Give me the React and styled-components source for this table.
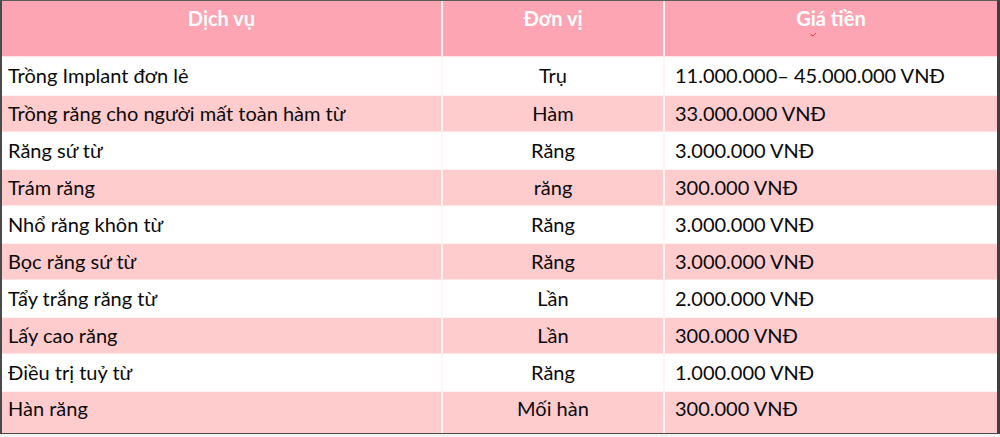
import React from 'react'
import styled, { createGlobalStyle } from 'styled-components'

const GlobalStyle = createGlobalStyle`
  html, body {
    margin: 0;
    padding: 0;
    background: #f4f4f4;
  }
  body {
    font-family: Lato, "Open Sans", "Liberation Sans", sans-serif;
  }
`

const rows = [
  { name: 'Trồng Implant đơn lẻ', unit: 'Trụ', price: '11.000.000– 45.000.000 VNĐ', h: 39 },
  { name: 'Trồng răng cho người mất toàn hàm từ', unit: 'Hàm', price: '33.000.000 VNĐ', h: 36 },
  { name: 'Răng sứ từ', unit: 'Răng', price: '3.000.000 VNĐ', h: 38 },
  { name: 'Trám răng', unit: 'răng', price: '300.000 VNĐ', h: 36 },
  { name: 'Nhổ răng khôn từ', unit: 'Răng', price: '3.000.000 VNĐ', h: 38 },
  { name: 'Bọc răng sứ từ', unit: 'Răng', price: '3.000.000 VNĐ', h: 36 },
  { name: 'Tẩy trắng răng từ', unit: 'Lần', price: '2.000.000 VNĐ', h: 38 },
  { name: 'Lấy cao răng', unit: 'Lần', price: '300.000 VNĐ', h: 36 },
  { name: 'Điều trị tuỷ từ', unit: 'Răng', price: '1.000.000 VNĐ', h: 38 },
  { name: 'Hàn răng', unit: 'Mối hàn', price: '300.000 VNĐ', h: 42, pb: 9 },
]

const App = () => {
  return (
    <>
      <GlobalStyle />
      <Frame>
        <HeadRow>
          <HeadCell>Dịch vụ</HeadCell>
          <HeadCell>Đơn vị</HeadCell>
          <HeadCell>
            G<Squiggle>i</Squiggle>á tiền
          </HeadCell>
        </HeadRow>
        {rows.map((r, i) => (
          <Row key={i} $pink={i % 2 === 1} $h={r.h} $pb={r.pb || 2}>
            <Cell>{r.name}</Cell>
            <Cell $center>{r.unit}</Cell>
            <Cell $price>{r.price}</Cell>
          </Row>
        ))}
      </Frame>
    </>
  )
}

export default App

const Frame = styled.div`
  width: 1000px;
  box-sizing: border-box;
  display: flex;
  flex-direction: column;
  background: #ffffff;
  border-top: 1px solid #5a5a5a;
  border-left: 2px solid #4a4a4a;
  border-right: 3px solid #3e3e3e;
  border-bottom: 1px solid #4a4a4a;
`

const HeadRow = styled.div`
  display: grid;
  grid-template-columns: 441px 222px 1fr;
  height: 55px;
`

const HeadCell = styled.div`
  box-sizing: border-box;
  background: #fda5b3;
  border-right: 2px solid #fff3f5;
  color: #ffffff;
  font-weight: 700;
  font-size: 20px;
  text-align: center;
  padding-top: 5px;
  &:last-child {
    border-right: none;
  }
`

const Squiggle = styled.span`
  text-decoration: underline wavy #e0202a;
  text-decoration-thickness: 1px;
  text-underline-offset: 6px;
`

const Row = styled.div`
  display: grid;
  grid-template-columns: 441px 222px 1fr;
  height: ${(p) => p.$h}px;
  box-sizing: border-box;
  border-top: 1px solid ${(p) => (p.$pink ? '#fff2f2' : '#ffe3e5')};
  background: ${(p) => (p.$pink ? '#ffcccd' : '#ffffff')};
  & > div {
    padding-bottom: ${(p) => p.$pb}px;
  }
`

const Cell = styled.div`
  display: flex;
  align-items: center;
  justify-content: ${(p) => (p.$center ? 'center' : 'flex-start')};
  box-sizing: border-box;
  padding-left: ${(p) => (p.$center ? '0' : p.$price ? '10px' : '6px')};
  border-right: ${(p) => (p.$price ? 'none' : '2px solid #fff5f5')};
  font-size: 20px;
  color: #0a0a0a;
  white-space: nowrap;
`
